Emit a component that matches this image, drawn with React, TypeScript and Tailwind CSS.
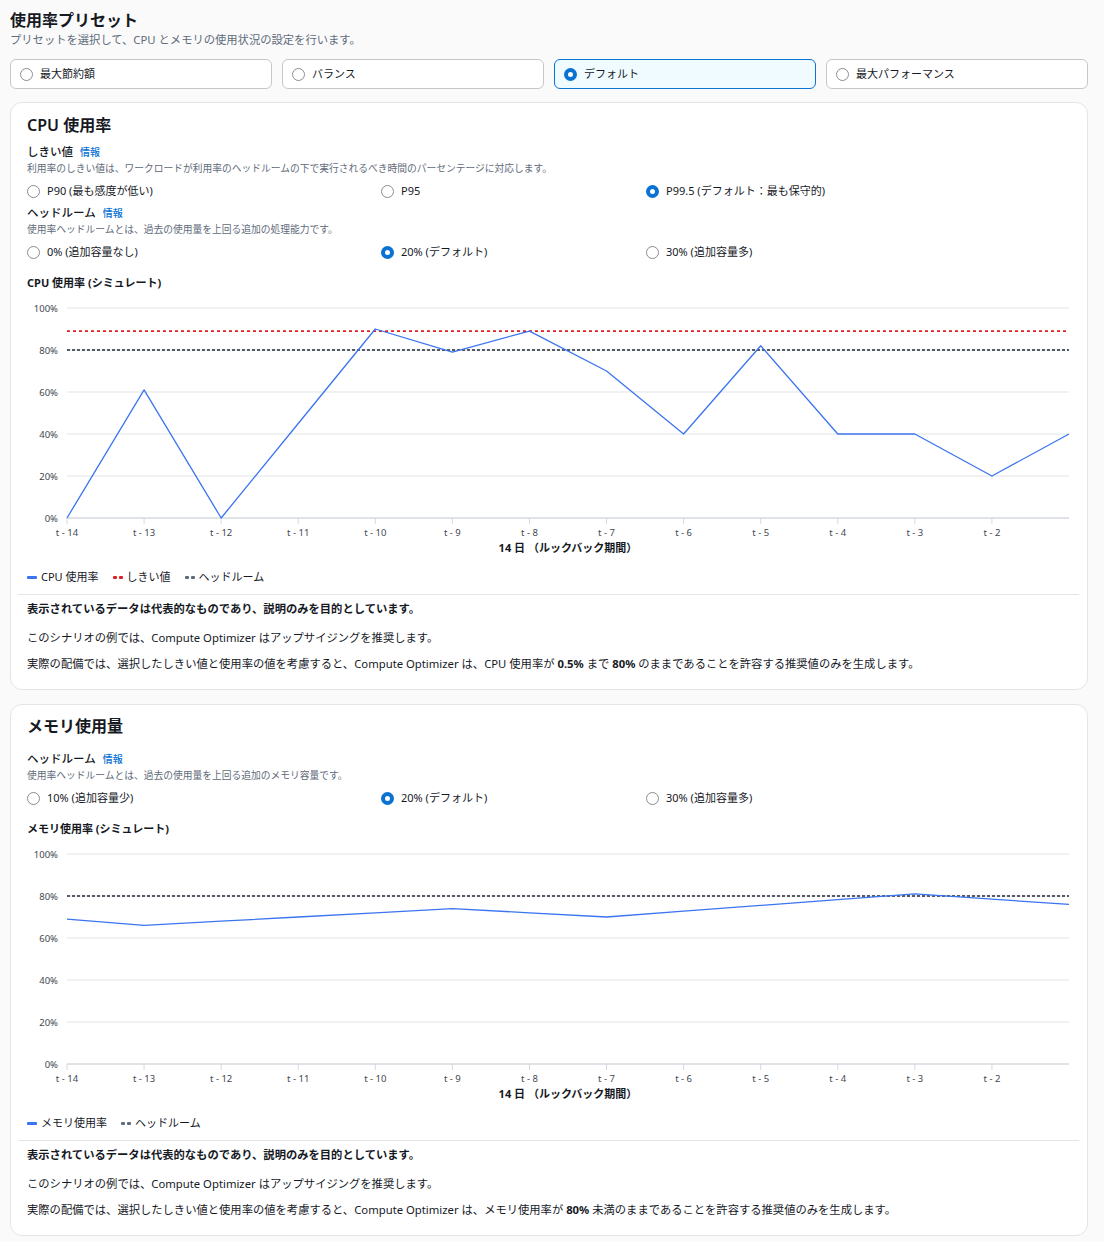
import React from "react";

interface RadioProps {
  checked?: boolean;
  label: string;
}

const RadioDot = ({ checked }: { checked?: boolean }) =>
  checked ? (
    <span className="inline-block w-[13px] h-[13px] rounded-full border-[4px] border-[#0972d3] bg-white shrink-0" />
  ) : (
    <span className="inline-block w-[13px] h-[13px] rounded-full border border-[#8c8c94] bg-white shrink-0" />
  );

const Radio = ({ checked, label }: RadioProps) => (
  <label className="flex items-center gap-[7px] text-[11px] leading-[18px] text-[#16191f]">
    <RadioDot checked={checked} />
    <span>{label}</span>
  </label>
);

const RadioRow = ({ items }: { items: RadioProps[] }) => (
  <div className="flex mt-[6px]">
    <div className="w-[354px]">
      <Radio {...items[0]} />
    </div>
    <div className="w-[265px]">
      <Radio {...items[1]} />
    </div>
    <div className="flex-1">
      <Radio {...items[2]} />
    </div>
  </div>
);

const FieldLabel = ({ text }: { text: string }) => (
  <div className="flex items-baseline gap-[7px] leading-[16px]">
    <span className="text-[11.5px] font-medium text-[#16191f]">{text}</span>
    <span className="text-[10px] font-medium text-[#0972d3]">情報</span>
  </div>
);

const Desc = ({ text }: { text: string }) => (
  <p className="mt-[2px] text-[9.75px] leading-[14px] text-[#5f6b7a]">{text}</p>
);

interface ChartProps {
  data: number[];
  threshold?: number;
  headroom: number;
}

const Chart = ({ data, threshold, headroom }: ChartProps) => {
  const W = 1046;
  const H = 262;
  const x0 = 40;
  const x1 = 1042;
  const step = (x1 - x0) / 13;
  const y = (v: number) => 220 - v * 2.1;
  const ticks = [14, 13, 12, 11, 10, 9, 8, 7, 6, 5, 4, 3, 2];
  const pts = data.map((v, i) => `${x0 + i * step},${y(v)}`).join(" ");
  return (
    <svg width={W} height={H} viewBox={`0 0 ${W} ${H}`} className="block mt-[7px]">
      {[100, 80, 60, 40, 20].map((v) => (
        <g key={v}>
          <line x1={x0} x2={x1} y1={y(v)} y2={y(v)} stroke="#ebedef" strokeWidth={1.5} />
          <text x={31} y={y(v) + 3.5} textAnchor="end" fontSize={9.5} fill="#414750">
            {v}%
          </text>
        </g>
      ))}
      <line x1={x0} x2={x1} y1={220} y2={220} stroke="#d5d9de" strokeWidth={1.5} />
      <text x={31} y={223.5} textAnchor="end" fontSize={9.5} fill="#414750">
        0%
      </text>
      {ticks.map((t, i) => (
        <g key={t}>
          <line x1={x0 + i * step} x2={x0 + i * step} y1={220} y2={226} stroke="#d5d9de" strokeWidth={1} />
          <text x={x0 + i * step} y={237.5} textAnchor="middle" fontSize={9.5} fill="#414750">
            {`t - ${t}`}
          </text>
        </g>
      ))}
      <text x={(x0 + x1) / 2} y={254} textAnchor="middle" fontSize={11} fontWeight={700} fill="#16191f">
        14 日 （ルックバック期間）
      </text>
      {threshold !== undefined && (
        <line
          x1={x0}
          x2={x1}
          y1={y(threshold)}
          y2={y(threshold)}
          stroke="#e02020"
          strokeWidth={1.6}
          strokeDasharray="3 3"
        />
      )}
      <line
        x1={x0}
        x2={x1}
        y1={y(headroom)}
        y2={y(headroom)}
        stroke="#545b64"
        strokeWidth={1.8}
        strokeDasharray="3 2"
      />
      <polyline points={pts} fill="none" stroke="#3b74f0" strokeWidth={1.3} strokeLinejoin="round" />
    </svg>
  );
};

const LegendDash = ({ color }: { color: string }) => (
  <span className="inline-flex gap-[2px] mr-[4px]">
    <span className="w-[4px] h-[3px] rounded-[1px]" style={{ background: color }} />
    <span className="w-[4px] h-[3px] rounded-[1px]" style={{ background: color }} />
  </span>
);

const Legend = ({ usageLabel, withThreshold }: { usageLabel: string; withThreshold?: boolean }) => (
  <div className="mt-[9px] flex items-center gap-[14px] text-[11px] leading-[16px] text-[#16191f]">
    <span className="flex items-center">
      <span className="w-[10px] h-[3px] rounded-[1px] bg-[#3b74f0] mr-[4px]" />
      {usageLabel}
    </span>
    {withThreshold && (
      <span className="flex items-center">
        <LegendDash color="#e02020" />
        しきい値
      </span>
    )}
    <span className="flex items-center">
      <LegendDash color="#5f6b7a" />
      ヘッドルーム
    </span>
  </div>
);

const Notes = ({ last }: { last: React.ReactNode }) => (
  <>
    <div className="mt-[9px] -ml-[9px] -mr-[8px] h-px bg-[#e3e5e8]" />
    <p className="mt-[6px] text-[11.3px] leading-[16px] font-bold text-[#16191f]">
      表示されているデータは代表的なものであり、説明のみを目的としています。
    </p>
    <p className="mt-[13px] text-[11.3px] leading-[16px] text-[#16191f]">
      このシナリオの例では、Compute Optimizer はアップサイジングを推奨します。
    </p>
    <p className="mt-[10px] text-[11.3px] leading-[16px] text-[#16191f]">{last}</p>
  </>
);

const presets = [
  { label: "最大節約額", checked: false },
  { label: "バランス", checked: false },
  { label: "デフォルト", checked: true },
  { label: "最大パフォーマンス", checked: false },
];

const cpuData = [0, 61, 0, 45, 90, 79, 89, 70, 40, 82, 40, 40, 20, 40];
const memData = [69, 66, 68, 70, 72, 74, 72, 70, 72.75, 75.5, 78.25, 81, 78.5, 76];

export default function App() {
  return (
    <div className="min-h-screen bg-[#fafafa] pl-[10px] pr-[16px] pt-[10px] pb-[6px] font-['Noto_Sans','Noto_Sans_CJK_JP',sans-serif] text-[#16191f]">
      <h1 className="text-[16px] leading-[20px] font-semibold">使用率プリセット</h1>
      <p className="mt-[2px] text-[11.3px] leading-[16px] text-[#5f6b7a]">
        プリセットを選択して、CPU とメモリの使用状況の設定を行います。
      </p>

      <div className="mt-[11px] grid grid-cols-4 gap-[10px]">
        {presets.map((p) => (
          <div
            key={p.label}
            className={
              p.checked
                ? "h-[30px] rounded-[6px] border-[1.5px] border-[#0972d3] bg-[#f0fbff] flex items-center pl-[9px] gap-[7px]"
                : "h-[30px] rounded-[6px] border border-[#c6c6cd] bg-white flex items-center pl-[9px] gap-[7px]"
            }
          >
            <RadioDot checked={p.checked} />
            <span className="text-[11px] text-[#16191f]">{p.label}</span>
          </div>
        ))}
      </div>

      <section className="mt-[13px] rounded-[12px] border border-[#e3e5e8] bg-white px-[16px] pt-[12px] pb-[17px]">
        <h2 className="text-[16px] leading-[20px] font-semibold">CPU 使用率</h2>
        <div className="mt-[9px]">
          <FieldLabel text="しきい値" />
        </div>
        <Desc text="利用率のしきい値は、ワークロードが利用率のヘッドルームの下で実行されるべき時間のパーセンテージに対応します。" />
        <RadioRow
          items={[
            { label: "P90 (最も感度が低い)" },
            { label: "P95" },
            { label: "P99.5 (デフォルト：最も保守的)", checked: true },
          ]}
        />
        <div className="mt-[5px]">
          <FieldLabel text="ヘッドルーム" />
        </div>
        <Desc text="使用率ヘッドルームとは、過去の使用量を上回る追加の処理能力です。" />
        <RadioRow
          items={[
            { label: "0% (追加容量なし)" },
            { label: "20% (デフォルト)", checked: true },
            { label: "30% (追加容量多)" },
          ]}
        />
        <h3 className="mt-[14px] text-[11px] leading-[16px] font-bold">CPU 使用率 (シミュレート)</h3>
        <Chart data={cpuData} threshold={89} headroom={80} />
        <Legend usageLabel="CPU 使用率" withThreshold />
        <Notes
          last={
            <>
              実際の配備では、選択したしきい値と使用率の値を考慮すると、Compute Optimizer は、CPU 使用率が{" "}
              <b>0.5%</b> まで <b>80%</b> のままであることを許容する推奨値のみを生成します。
            </>
          }
        />
      </section>

      <section className="mt-[14px] rounded-[12px] border border-[#e3e5e8] bg-white px-[16px] pt-[11px] pb-[17px]">
        <h2 className="text-[16px] leading-[20px] font-semibold">メモリ使用量</h2>
        <div className="mt-[15px]">
          <FieldLabel text="ヘッドルーム" />
        </div>
        <Desc text="使用率ヘッドルームとは、過去の使用量を上回る追加のメモリ容量です。" />
        <RadioRow
          items={[
            { label: "10% (追加容量少)" },
            { label: "20% (デフォルト)", checked: true },
            { label: "30% (追加容量多)" },
          ]}
        />
        <h3 className="mt-[14px] text-[11px] leading-[16px] font-bold">メモリ使用率 (シミュレート)</h3>
        <Chart data={memData} headroom={80} />
        <Legend usageLabel="メモリ使用率" />
        <Notes
          last={
            <>
              実際の配備では、選択したしきい値と使用率の値を考慮すると、Compute Optimizer は、メモリ使用率が{" "}
              <b>80%</b> 未満のままであることを許容する推奨値のみを生成します。
            </>
          }
        />
      </section>
    </div>
  );
}
